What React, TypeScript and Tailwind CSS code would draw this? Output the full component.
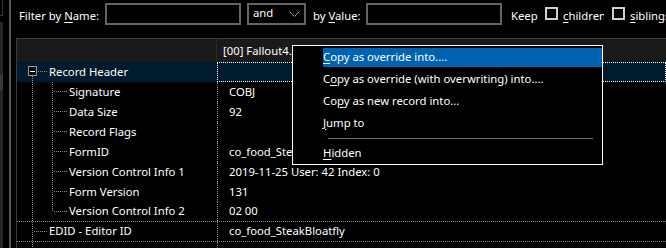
import React from "react";

const FONT = { fontFamily: '"Noto Sans", "Segoe UI", Arial, sans-serif' };

type Kind = "root" | "child" | "lastChild" | "top";

interface Row {
  name: string;
  value: string;
  kind: Kind;
  selected?: boolean;
  groupEnd?: boolean;
}

const rows: Row[] = [
  { name: "Record Header", value: "", kind: "root", selected: true },
  { name: "Signature", value: "COBJ", kind: "child" },
  { name: "Data Size", value: "92", kind: "child" },
  { name: "Record Flags", value: "", kind: "child" },
  { name: "FormID", value: "co_food_SteakBloatfly [COBJ:00249F21]", kind: "child" },
  { name: "Version Control Info 1", value: "2019-11-25 User: 42 Index: 0", kind: "child" },
  { name: "Form Version", value: "131", kind: "child" },
  { name: "Version Control Info 2", value: "02 00", kind: "lastChild", groupEnd: true },
  { name: "EDID - Editor ID", value: "co_food_SteakBloatfly", kind: "top", groupEnd: true },
  { name: "YNAM - Sound - Pick Up", value: "ITMFoodUp [SNDR:0001F4E2]", kind: "top" },
];

function TreeLines({ kind }: { kind: Kind }) {
  const stroke = "#8a8a8a";
  const dash = "1 1";
  const deep = kind === "child" || kind === "lastChild";
  const w = deep ? 50 : 30;
  return (
    <svg width={w} height={20} className="shrink-0" shapeRendering="crispEdges">
      {kind === "root" && (
        <>
          <line x1={15.5} y1={14} x2={15.5} y2={20} stroke={stroke} strokeDasharray={dash} />
          <line x1={21} y1={9.5} x2={30} y2={9.5} stroke={stroke} strokeDasharray={dash} />
          <rect x={11.5} y={4.5} width={8} height={9} fill="#000" stroke="#9a9a9a" />
          <line x1={13} y1={9.5} x2={18} y2={9.5} stroke="#ffffff" />
        </>
      )}
      {(kind === "top" || deep) && (
        <line x1={15.5} y1={0} x2={15.5} y2={20} stroke={stroke} strokeDasharray={dash} />
      )}
      {kind === "top" && (
        <line x1={17} y1={9.5} x2={30} y2={9.5} stroke={stroke} strokeDasharray={dash} />
      )}
      {deep && (
        <>
          <line
            x1={35.5}
            y1={0}
            x2={35.5}
            y2={kind === "lastChild" ? 10 : 20}
            stroke={stroke}
            strokeDasharray={dash}
          />
          <line x1={37} y1={9.5} x2={50} y2={9.5} stroke={stroke} strokeDasharray={dash} />
        </>
      )}
    </svg>
  );
}

function Checkbox() {
  return <div className="mt-[4px] h-[13px] w-[13px] shrink-0 border-2 border-[#cfcfcf]" />;
}

function FilterBar() {
  return (
    <div className="flex h-[38px] shrink-0 items-start pt-[3px] pl-[3px] text-[11.3px] text-white">
      <span className="mt-[5px] w-[86px] shrink-0 leading-[16px]">
        Filter by <span className="underline underline-offset-2">N</span>ame:
      </span>
      <div className="h-[22px] w-[136px] shrink-0 border-2 border-[#646464]" />
      <div className="ml-[6px] flex h-[22px] w-[59px] shrink-0 items-center justify-between border-2 border-[#646464] pl-[4px] pr-[4px]">
        <span className="-mt-[2px] leading-[16px]">and</span>
        <svg width="11" height="7" viewBox="0 0 11 7">
          <path d="M0.5 0.5 L5.5 5.5 L10.5 0.5" fill="none" stroke="#9a9a9a" />
        </svg>
      </div>
      <span className="mt-[5px] ml-[7px] w-[53px] shrink-0 leading-[16px]">
        by <span className="underline underline-offset-2">V</span>alue:
      </span>
      <div className="h-[22px] w-[136px] shrink-0 border-2 border-[#646464]" />
      <span className="mt-[5px] ml-[9px] w-[34px] shrink-0 leading-[16px]">Keep</span>
      <Checkbox />
      <span className="mt-[5px] ml-[5px] w-[41px] shrink-0 overflow-hidden whitespace-nowrap leading-[16px]">
        <span className="underline underline-offset-2">c</span>hildren
      </span>
      <div className="ml-[8px]">
        <Checkbox />
      </div>
      <span className="mt-[5px] ml-[5px] shrink-0 whitespace-nowrap leading-[16px]">
        <span className="underline underline-offset-2">s</span>iblings
      </span>
    </div>
  );
}

function Grid() {
  return (
    <div className="flex-1 border-t border-l border-[#3c3c3c] text-[11.3px] text-white">
      <div className="flex h-[23px] bg-[#1a1a1a]">
        <div className="w-[200px] shrink-0 border-r border-[#2a2a2a]" />
        <div className="flex items-center pl-[6px] whitespace-nowrap leading-[16px]">[00] Fallout4.esm</div>
      </div>
      {rows.map((r) => (
        <div
          key={r.name}
          className={`flex h-[20px] ${r.selected ? "bg-[#001a2e]" : ""} ${
            r.groupEnd ? "border-b border-dotted border-[#8a8a8a]" : ""
          }`}
        >
          <div className="flex w-[200px] shrink-0 items-center">
            <TreeLines kind={r.kind} />
            <span className="ml-[2px] -mt-px whitespace-nowrap leading-[16px]">{r.name}</span>
          </div>
          <div
            className={`flex flex-1 items-center whitespace-nowrap border-l border-dotted pl-[11px] leading-[16px] ${
              r.selected ? "border-y border-r border-white" : "border-[#8a8a8a]"
            }`}
          >
            <span className="-mt-px">{r.value}</span>
          </div>
        </div>
      ))}
    </div>
  );
}

function ContextMenu() {
  const items = [
    { pre: "", key: "C", post: "opy as override into....", active: true },
    { pre: "C", key: "o", post: "py as override (with overwriting) into....", active: false },
    { pre: "Co", key: "p", post: "y as new record into...", active: false },
    { pre: "", key: "J", post: "ump to", active: false },
  ];
  return (
    <div className="absolute left-[292px] top-[45px] w-[311px] border border-white bg-black pl-px text-[11.3px] text-white">
      {items.map((it) => (
        <div
          key={it.post}
          className={`flex h-[22px] items-center pl-[29px] leading-[16px] ${
            it.active ? "bg-[#0063b1] bg-clip-content pt-[2px] pb-px" : ""
          }`}
        >
          <span className="-mt-px whitespace-nowrap">
            {it.pre}
            <span className="underline underline-offset-2">{it.key}</span>
            {it.post}
          </span>
        </div>
      ))}
      <div className="flex h-[8px] items-center pl-[34px] pr-[9px]">
        <div className="h-px w-full bg-[#6e6e6e]" />
      </div>
      <div className="flex h-[22px] items-center pl-[29px] leading-[16px]">
        <span className="-mt-px">
          <span className="underline underline-offset-2">H</span>idden
        </span>
      </div>
    </div>
  );
}

export default function App() {
  return (
    <div className="relative flex h-[248px] w-[666px] overflow-hidden bg-black" style={FONT}>
      <div className="flex h-full w-[16px] shrink-0">
        <div className="flex w-[3px] flex-col">
          <div className="h-[16px] border-r border-b border-[#3a3a3a]" />
          <div className="mt-[6px] flex-1 bg-[#262626] pt-[53px]">
            <div className="h-[15px] bg-[#3a3a3a]" />
          </div>
        </div>
        <div className="w-[6px]" />
        <div className="w-[2px] bg-[#5b5b5b]" />
      </div>
      <div className="flex min-w-0 flex-1 flex-col">
        <FilterBar />
        <Grid />
      </div>
      <ContextMenu />
    </div>
  );
}
